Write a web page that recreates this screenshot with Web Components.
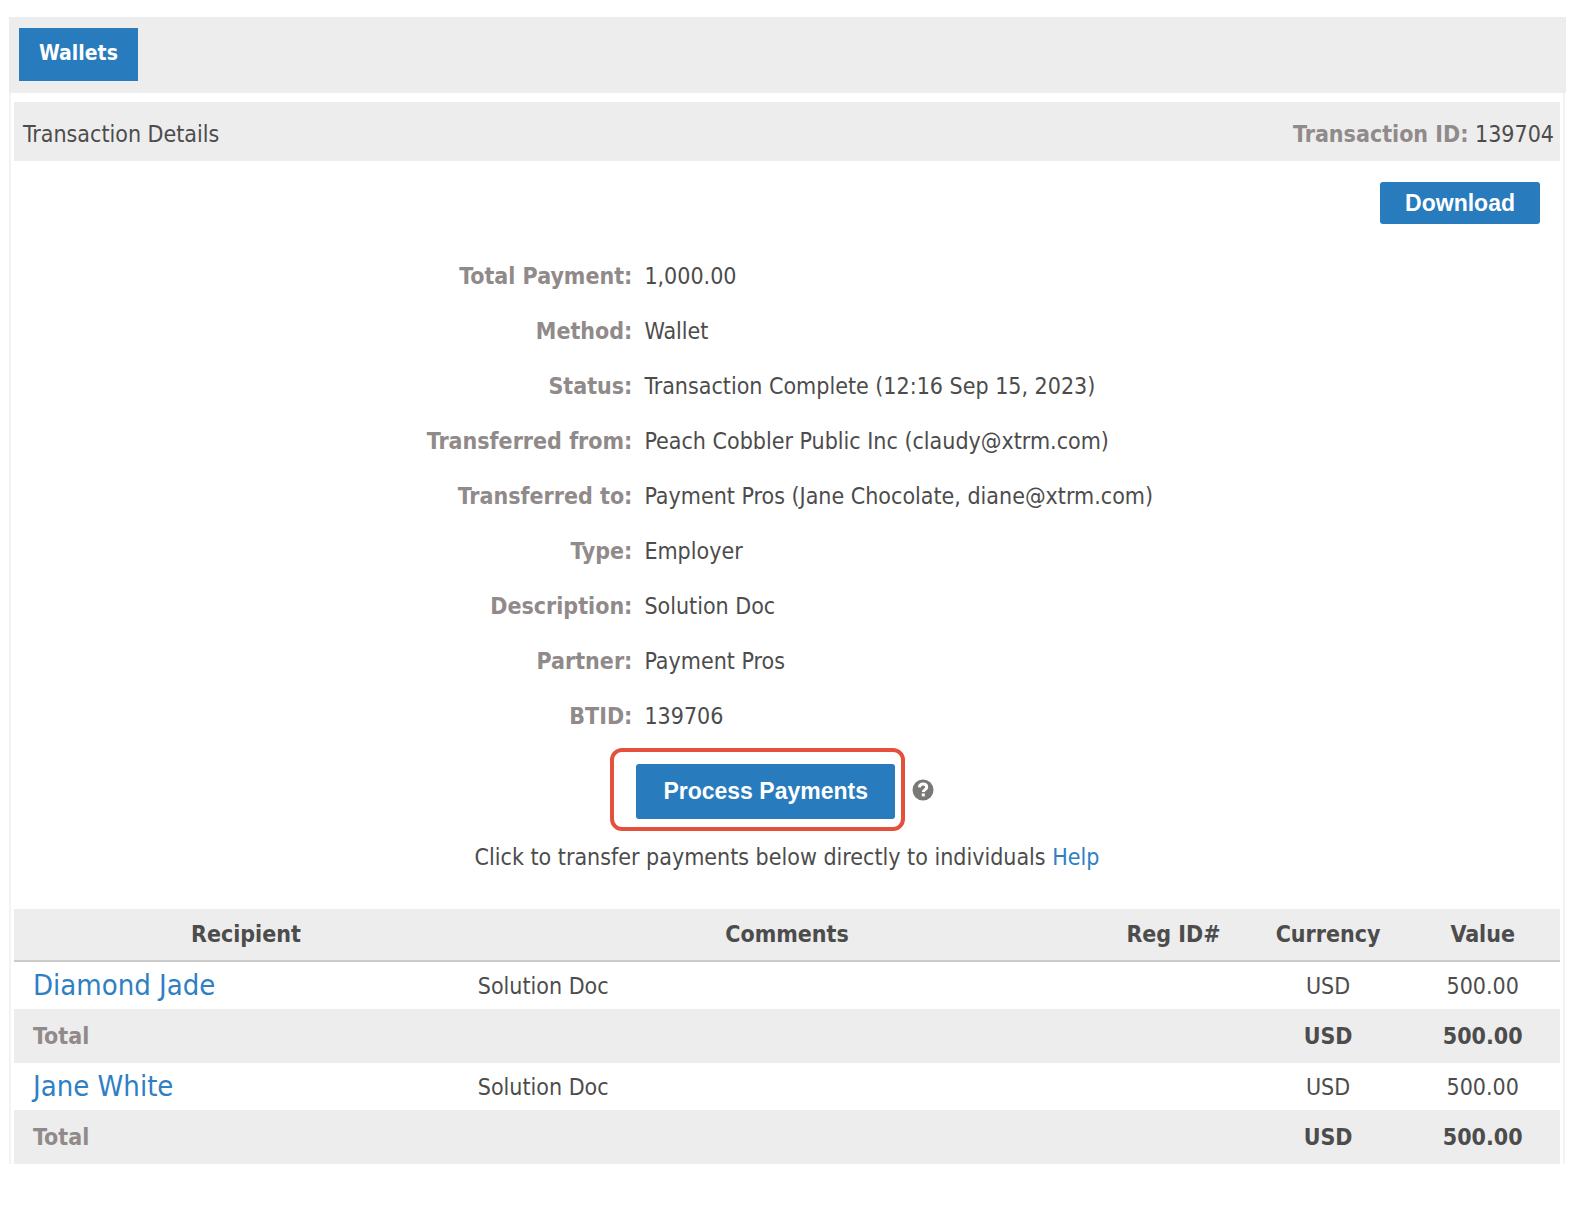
<!DOCTYPE html>
<html lang="en">
<head>
<meta charset="utf-8">
<title>Transaction Details</title>
<style>
  body {
    margin: 0;
    padding: 17px 12px 44px 9px;
    background: #fff;
    color: #4c4c4c;
    font-family: "DejaVu Sans Condensed", "DejaVu Sans", Tahoma, sans-serif;
    font-size: 23px;
    line-height: 28px;
    --blue: #287bbd;
    --link: #2f80c3;
    --bar: #ededed;
    --label: #918a8a;
  }
</style>
</head>
<body>
<app-tabs><a href="#wallets">Wallets</a></app-tabs>

<app-panel>
  <app-title-bar>
    Transaction Details
    <span slot="id">139704</span>
  </app-title-bar>

  <app-toolbar><app-button>Download</app-button></app-toolbar>

  <app-details></app-details>

  <app-process></app-process>

  <app-recipients></app-recipients>
</app-panel>

<script>
const define = (name, html) => {
  const template = document.createElement('template');
  template.innerHTML = html;

  customElements.define(name, class extends HTMLElement {
    constructor() {
      super();
      this.attachShadow({ mode: 'open' });
      this.shadowRoot.appendChild(template.content.cloneNode(true));
    }
  });
};

const details = [
  ['Total Payment', '1,000.00'],
  ['Method', 'Wallet'],
  ['Status', 'Transaction Complete (12:16 Sep 15, 2023)'],
  ['Transferred from', 'Peach Cobbler Public Inc (claudy@xtrm.com)'],
  ['Transferred to', 'Payment Pros (Jane Chocolate, diane@xtrm.com)'],
  ['Type', 'Employer'],
  ['Description', 'Solution Doc'],
  ['Partner', 'Payment Pros'],
  ['BTID', '139706']
];

const recipients = [
  { name: 'Diamond Jade', comments: 'Solution Doc', currency: 'USD', value: '500.00' },
  { name: 'Jane White', comments: 'Solution Doc', currency: 'USD', value: '500.00' }
];

define('app-tabs', `
  <style>
    :host {
      display: block;
      padding: 11px 10px 12px;
      background: var(--bar);
    }

    nav {
      display: flex;
    }

    ::slotted(a) {
      padding: 11px 20px 14px;
      background: var(--blue);
      color: #fff;
      font-size: 21px;
      font-weight: bold;
      text-decoration: none;
    }
  </style>

  <nav><slot></slot></nav>
`);

define('app-panel', `
  <style>
    :host {
      display: block;
      margin-right: 1px;
      padding: 9px 3px 0;
      border: 2px solid #f3f3f3;
      border-top: 0;
      border-bottom: 0;
    }
  </style>

  <main><slot></slot></main>
`);

define('app-title-bar', `
  <style>
    :host {
      display: flex;
      justify-content: space-between;
      padding: 18px 6px 13px 9px;
      background: var(--bar);
    }

    b {
      color: var(--label);
    }
  </style>

  <span><slot></slot></span>
  <span><b>Transaction ID:</b> <slot name="id"></slot></span>
`);

define('app-toolbar', `
  <style>
    :host {
      display: flex;
      justify-content: flex-end;
      padding: 21px 20px 0;
    }
  </style>

  <slot></slot>
`);

define('app-button', `
  <style>
    :host {
      display: block;
    }

    button {
      display: block;
      padding: var(--button-padding, 7px 25px);
      border: 0;
      border-radius: 3px;
      background: var(--blue);
      color: #fff;
      font: bold 23px/28px "Liberation Sans", Arial, sans-serif;
      cursor: pointer;
    }
  </style>

  <button type="button"><slot></slot></button>
`);

define('app-details', `
  <style>
    :host {
      display: block;
      padding-top: 25px;
    }

    dl {
      margin: 0;
    }

    div {
      display: grid;
      grid-template-columns: 2fr 3fr;
      padding: 13px 0 14px;
    }

    dt {
      color: var(--label);
      font-weight: bold;
      text-align: right;
    }

    dd {
      margin: 0 0 0 12px;
    }
  </style>

  <dl>
    ${details.map(([label, value]) => `<div><dt>${label}:</dt><dd>${value}</dd></div>`).join('')}
  </dl>
`);

define('app-process', `
  <style>
    :host {
      display: block;
      padding: 4px 0 38px;
    }

    .action {
      display: flex;
      align-items: center;
      gap: 7px;
      margin-left: calc(40% - 22px);
    }

    .frame {
      padding: 12px 6px 8px 22px;
      border: 4px solid #e5503d;
      border-radius: 12px;
      --button-padding: 13px 27px 14px;
    }

    .hint {
      padding: 0;
      border: 0;
      background: none;
      cursor: pointer;
    }

    svg {
      display: block;
    }

    p {
      margin: 12px 0 0;
      text-align: center;
    }

    a {
      color: var(--link);
      text-decoration: none;
    }
  </style>

  <div class="action">
    <div class="frame"><app-button>Process Payments</app-button></div>
    <button class="hint" type="button" aria-label="About processing payments">
      <svg width="22" height="22" viewBox="0 0 22 22">
        <circle cx="11" cy="11" r="10.5" fill="#7a7777"/>
        <path d="M7.4 8.4C7.6 6.2 9 5.100 11.100 5.100C13.200 5.100 14.700 6.300 14.700 8.200C14.700 10.600 11.300 10.600 11.300 13.100" fill="none" stroke="#fff" stroke-width="3"/>
        <rect x="9.800" y="14.400" width="3" height="3" fill="#fff"/>
      </svg>
    </button>
  </div>
  <p>Click to transfer payments below directly to individuals <a href="#help">Help</a></p>
`);

define('app-recipients', `
  <style>
    :host {
      display: block;
    }

    table {
      width: 100%;
      table-layout: fixed;
      border-collapse: collapse;
    }

    th, td {
      padding: 0;
      text-align: center;
    }

    thead th {
      padding: 11px 0 12px;
      border-bottom: 2px solid #cbcbcb;
      background: var(--bar);
    }

    .recipient {
      width: 30%;
    }

    .comments {
      width: 40%;
    }

    tbody td {
      padding: 9px 0 8px;
    }

    tbody td:nth-child(-n+2), tbody th {
      text-align: left;
    }

    tbody td:first-child {
      padding-left: 19px;
    }

    a {
      color: var(--link);
      font-size: 29px;
      text-decoration: none;
    }

    .total th, .total td {
      padding: 13px 0;
      background: var(--bar);
      font-weight: bold;
    }

    .total th {
      padding-left: 19px;
      color: var(--label);
    }

    .total td:nth-child(2) {
      text-align: center;
    }
  </style>

  <table>
    <thead>
      <tr>
        <th class="recipient">Recipient</th>
        <th class="comments">Comments</th>
        <th>Reg ID#</th>
        <th>Currency</th>
        <th>Value</th>
      </tr>
    </thead>
    <tbody>
      ${recipients.map(({ name, comments, currency, value }) => `
        <tr>
          <td><a href="#recipient">${name}</a></td>
          <td>${comments}</td>
          <td></td>
          <td>${currency}</td>
          <td>${value}</td>
        </tr>
        <tr class="total">
          <th colspan="3">Total</th>
          <td>${currency}</td>
          <td>${value}</td>
        </tr>
      `).join('')}
    </tbody>
  </table>
`);
</script>
</body>
</html>
